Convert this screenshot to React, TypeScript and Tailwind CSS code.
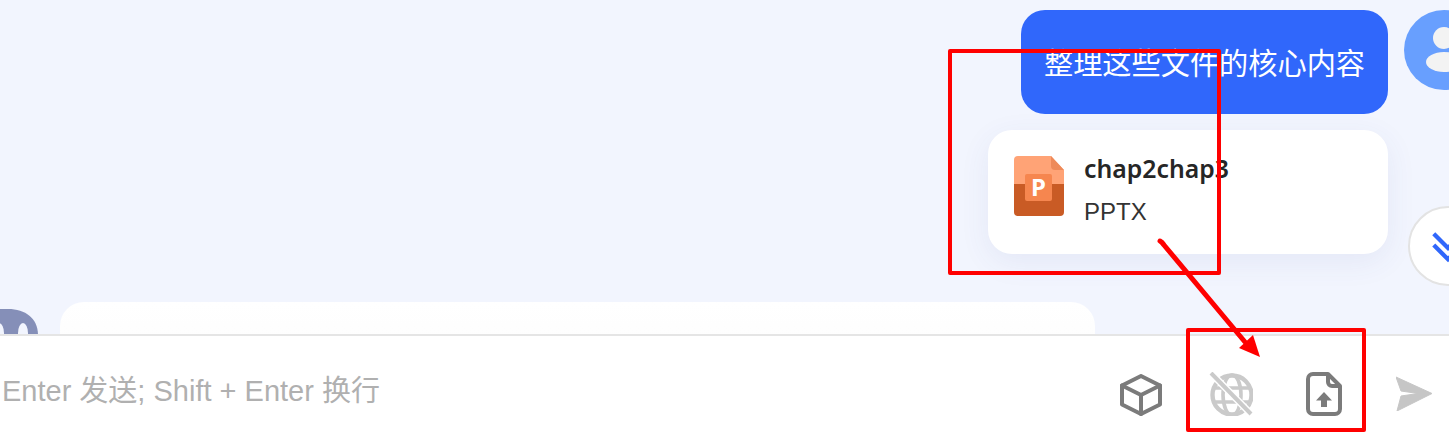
import React from 'react';

const cjkSans = "font-['Noto_Sans','Noto_Sans_CJK_SC',sans-serif]";

const PptIcon = () => (
  <svg width="50" height="60" viewBox="0 0 50 60" className="shrink-0">
    <path d="M4 0H37L50 14V28H0V4a4 4 0 0 1 4-4z" fill="#ffa376" />
    <path d="M0 28H50V56a4 4 0 0 1-4 4H4a4 4 0 0 1-4-4z" fill="#c95b25" />
    <path d="M37 0L50 14H41a4 4 0 0 1-4-4z" fill="#ee8a59" />
    <rect x="11" y="18" width="27" height="27" rx="2" fill="#f6864f" />
    <text x="24.5" y="40" textAnchor="middle" fontSize="24" fontWeight="700" fill="#ffffff" fontFamily="'Noto Sans', sans-serif">P</text>
  </svg>
);

const UserAvatar = () => (
  <svg width="80" height="80" viewBox="0 0 80 80" className="shrink-0">
    <circle cx="40" cy="40" r="40" fill="#689ffe" />
    <circle cx="40" cy="28" r="11" fill="#f3f3f3" />
    <ellipse cx="40" cy="52" rx="18" ry="10" fill="#f3f3f3" />
  </svg>
);

const BotAvatar = () => (
  <svg width="80" height="80" viewBox="0 0 80 80" className="shrink-0">
    <path d="M0 80V26C0 10 14 0 30 0H50C68 0 80 10 80 26V80z" fill="#858fb8" />
    <ellipse cx="41" cy="24" rx="5" ry="10" fill="#f2f5fe" />
    <ellipse cx="65" cy="24" rx="5" ry="10" fill="#f2f5fe" />
  </svg>
);

const CubeIcon = () => (
  <svg width="42" height="42" viewBox="0 0 42 42" fill="none" stroke="#7b7b7b" strokeWidth="4" strokeLinejoin="round" strokeLinecap="round">
    <path d="M21 2L40 11.5V30.5L21 40L2 30.5V11.5z" />
    <path d="M2 11.5L21 21L40 11.5M21 21V40" />
  </svg>
);

const GlobeOffIcon = () => (
  <svg width="44" height="44" viewBox="0 0 44 44" fill="none" stroke="#cacaca" strokeWidth="3.6">
    <circle cx="23" cy="23" r="19.5" strokeWidth="4.4" />
    <ellipse cx="23" cy="23" rx="9" ry="20" />
    <path d="M4 16H42M4 30H42" />
    <path d="M2 1L42 42" stroke="#ffffff" strokeWidth="7" />
    <path d="M2 1L42 42" strokeWidth="4" />
  </svg>
);

const FileUpIcon = () => (
  <svg width="36" height="44" viewBox="0 0 36 44" fill="none">
    <path d="M7 2H22L34 14V37a5 5 0 0 1-5 5H7a5 5 0 0 1-5-5V7a5 5 0 0 1 5-5z" stroke="#7b7b7b" strokeWidth="4" strokeLinejoin="round" />
    <path d="M22 2V10a4 4 0 0 0 4 4H34" stroke="#7b7b7b" strokeWidth="4" strokeLinejoin="round" />
    <path d="M18 20L26 28.5H21V35H15V28.5H10z" fill="#7b7b7b" />
  </svg>
);

const SendIcon = () => (
  <svg width="36" height="35" viewBox="0 0 36 35">
    <path d="M0 1L36 17.5L1 35L5 20L22 17.5L5 15z" fill="#c6c6c6" strokeLinejoin="round" stroke="#c6c6c6" strokeWidth="1" />
  </svg>
);

const ScrollDownIcon = () => (
  <svg width="80" height="80" viewBox="0 0 80 80" fill="none" stroke="#3067fb" strokeWidth="4.5">
    <path d="M25 27L40 42L55 27M25 39L40 54L55 39" />
  </svg>
);

const Annotations = () => (
  <>
    <div className="absolute left-[948px] top-[49px] w-[273px] h-[226px] border-[4px] border-[#ff0000] rounded-[2px]" />
    <div className="absolute left-[1186px] top-[328px] w-[180px] h-[104px] border-[4px] border-[#ff0000] rounded-[2px]" />
    <svg width="130" height="140" viewBox="0 0 130 140" className="absolute left-[1145px] top-[230px]">
      <path d="M15 11Q17 12 19 15L100 112" stroke="#ff0000" strokeWidth="5" strokeLinecap="round" fill="none" />
      <path d="M115 127L94 118L108 105z" fill="#ff0000" />
    </svg>
  </>
);

export default function App() {
  return (
    <div className={`relative w-[1449px] h-[439px] overflow-hidden flex flex-col bg-white ${cjkSans}`}>
      <main className="h-[334px] shrink-0 overflow-hidden bg-[#f2f5fe] pt-[10px] relative">
        <div className="flex justify-end items-start gap-[16px] mr-[-35px]">
          <div className="flex flex-col items-end gap-[16px]">
            <div className="w-[367px] h-[104px] rounded-[24px] bg-[#3067fb] text-white text-[29.2px] leading-[102px] text-center font-['Noto_Sans_CJK_SC',sans-serif]">
              整理这些文件的核心内容
            </div>
            <div className="w-[400px] h-[124px] rounded-[24px] bg-white shadow-[0_8px_30px_rgba(60,80,150,0.08)] pl-[26px] pt-[26px] flex items-start gap-[20px]">
              <PptIcon />
              <div className="flex flex-col text-[#262626]">
                <span className="text-[24.8px] leading-[28px] mt-[-2px] font-semibold">chap2chap3</span>
                <span className="text-[24px] leading-[28px] mt-[16px] text-[#333333] font-['Liberation_Sans',sans-serif]">PPTX</span>
              </div>
            </div>
          </div>
          <UserAvatar />
        </div>
        <div className="flex items-start gap-[22px] ml-[-42px] mt-[48px]">
          <div className="mt-[7px]"><BotAvatar /></div>
          <div className="w-[1035px] h-[120px] rounded-t-[24px] bg-gradient-to-b from-white to-[#fafafa]" />
        </div>
        <div className="absolute left-[1408px] top-[206px] w-[80px] h-[80px] rounded-full bg-white border-[2px] border-[#e3e3e3] flex items-center justify-center">
          <ScrollDownIcon />
        </div>
      </main>
      <footer className="flex-1 border-t-[2px] border-[#e5e5e5] bg-white flex items-center pl-[2px] pt-[12px]">
        <div className="flex-1 text-[29px] mb-[3px] text-[#b0b0b0] font-['Liberation_Sans','Noto_Sans_CJK_SC',sans-serif]">
          Enter 发送; Shift + Enter 换行
        </div>
        <div className="flex items-center mr-[17px]">
          <div className="mr-[47px] mt-[2px]"><CubeIcon /></div>
          <div className="mr-[53px]"><GlobeOffIcon /></div>
          <div className="mr-[54px]"><FileUpIcon /></div>
          <SendIcon />
        </div>
      </footer>
      <Annotations />
    </div>
  );
}
